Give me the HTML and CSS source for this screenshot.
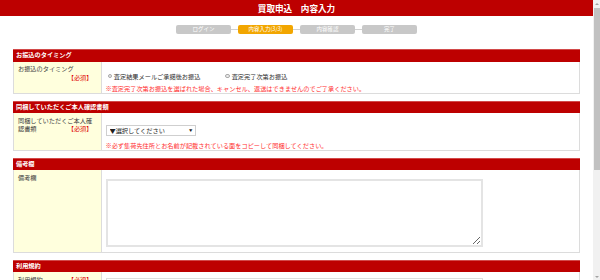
FILE: index.html
```html
<!DOCTYPE html>
<html lang="ja">
<head>
<meta charset="utf-8">
<title>買取申込 内容入力</title>
<link rel="stylesheet" href="styles.css">
</head>
<body>
<div class="window">
<div class="page">
<header class="site-header">
  <h1 class="site-title">買取申込　内容入力</h1>
</header>

<nav class="steps">
  <span class="step">ログイン</span>
  <span class="connector"></span>
  <span class="step current">内容入力(3/3)</span>
  <span class="connector"></span>
  <span class="step">内容確認</span>
  <span class="connector"></span>
  <span class="step">完了</span>
</nav>

<main class="form">
  <section class="section">
    <h2 class="section-head">お振込のタイミング</h2>
    <div class="row">
      <div class="row-label">お振込のタイミング<span class="req">【必須】</span></div>
      <div class="row-field field-timing">
        <div class="radios">
          <label class="radio"><input type="radio" name="timing" class="radio-input">査定結果メールご承諾後お振込</label>
          <label class="radio radio-second"><input type="radio" name="timing" class="radio-input">査定完了次第お振込</label>
        </div>
        <p class="note note-timing">※査定完了次第お振込を選ばれた場合、キャンセル、返送はできませんのでご了承ください。</p>
      </div>
    </div>
  </section>

  <section class="section">
    <h2 class="section-head">同梱していただくご本人確認書類</h2>
    <div class="row">
      <div class="row-label">同梱していただくご本人確認書類<span class="req">【必須】</span></div>
      <div class="row-field field-doc">
        <div class="select-wrap">
          <select class="select">
            <option>▼選択してください</option>
            <option>運転免許証</option>
            <option>健康保険証</option>
            <option>パスポート</option>
          </select>
        </div>
        <p class="note note-doc">※必ず集荷先住所とお名前が記載されている面をコピーして同梱してください。</p>
      </div>
    </div>
  </section>

  <section class="section">
    <h2 class="section-head">備考欄</h2>
    <div class="row">
      <div class="row-label">備考欄</div>
      <div class="row-field field-memo">
        <textarea class="memo"></textarea>
      </div>
    </div>
  </section>

  <section class="section">
    <h2 class="section-head">利用規約</h2>
    <div class="row">
      <div class="row-label">利用規約<span class="req">【必須】</span></div>
      <div class="row-field field-terms">
        <div class="terms-box">
          <p>第1条（目的）本規約は、当社が提供する買取サービスの利用条件を定めるものです。</p>
          <p>第2条（申込）お客様は、本規約に同意のうえ買取をお申込みいただくものとします。</p>
        </div>
      </div>
    </div>
  </section>
</main>
</div>
<div class="scrollbar" aria-hidden="true">
  <span class="sb-arrow sb-up"></span>
  <span class="sb-track"><span class="sb-thumb"></span></span>
  <span class="sb-arrow sb-down"></span>
</div>
</div>
</body>
</html>
```

FILE: styles.css
```css
body {
  margin: 0;
  background: #fff;
  color: #444;
  font-family: "Noto Sans CJK JP", "Noto Sans", sans-serif;
  font-size: 6.2px;
  line-height: 9px;
}

p, h1, h2 {
  margin: 0;
}

.window {
  display: flex;
  height: 100vh;
  overflow: hidden;
}

.page {
  flex: 1;
  min-width: 0;
  overflow: hidden;
}

/* scrollbar drawn as a column on the right */
.scrollbar {
  width: 7px;
  flex: none;
  display: flex;
  flex-direction: column;
  background: #f1f1f1;
}

.sb-arrow {
  height: 7px;
  flex: none;
  display: flex;
  align-items: center;
  justify-content: center;
}

.sb-arrow::before {
  content: "";
  width: 0;
  height: 0;
  border-left: 2px solid transparent;
  border-right: 2px solid transparent;
}

.sb-up::before {
  border-bottom: 2.5px solid #a3a3a3;
}

.sb-down::before {
  border-top: 2.5px solid #a3a3a3;
}

.sb-track {
  flex: 1;
  display: flex;
  flex-direction: column;
  padding: 1px 0 0 1px;
}

.sb-thumb {
  height: 162px;
  background: #c1c1c1;
}

.site-header {
  background: #bd0000;
  height: 16px;
  display: flex;
  align-items: center;
  justify-content: center;
}

.site-title {
  color: #fff;
  font-size: 8.6px;
  font-weight: bold;
  line-height: 16px;
}

.steps {
  display: flex;
  justify-content: center;
  align-items: center;
  margin-top: 9px;
  height: 9px;
}

.step {
  width: 55.5px;
  height: 9px;
  border-radius: 2px;
  background: #c8c8c8;
  color: #fff;
  font-size: 5.5px;
  line-height: 9px;
  text-align: center;
}

.step.current {
  background: #f2a600;
}

.connector {
  width: 6.5px;
  height: 1px;
  background: #d0d0d0;
}

.form {
  width: 567px;
  margin: 15px auto 0;
}

.section {
  margin-bottom: 6.5px;
}

.section-head {
  background: #bd0000;
  color: #fff;
  font-size: 6.2px;
  font-weight: bold;
  height: 12.5px;
  line-height: 12.5px;
  padding-left: 3px;
  box-shadow: inset 0 1px 0 #d24a4a;
}

.row {
  display: grid;
  grid-template-columns: 87.5px 1fr;
  border: 1px solid #dcdcdc;
  border-top: none;
}

.row-label {
  background: #ffffdd;
  border-right: 1px solid #dcdcdc;
  padding: 3.5px 8px 0 4px;
  line-height: 8.7px;
  color: #3d3d3d;
}

.req {
  float: right;
  color: #e00000;
}

.row-field {
  padding: 0 4px;
}

.field-timing {
  padding-top: 10px;
  padding-bottom: 0.5px;
}

.radios {
  display: flex;
  align-items: center;
  height: 9px;
}

.radio {
  display: inline-flex;
  align-items: center;
  color: #2e2e2e;
}

.radio-second {
  margin-left: 23px;
}

.radio-input {
  appearance: none;
  width: 4.7px;
  height: 4.7px;
  margin: 0 1.6px 0 2px;
  border: 0.8px solid #a8a8a8;
  border-radius: 50%;
  background: #ececec;
  box-sizing: border-box;
}

.note {
  color: #ff2e2e;
  line-height: 9px;
}

.note-timing {
  margin-top: 3px;
}

.field-doc {
  padding-top: 11.5px;
  padding-bottom: 0.5px;
}

.select-wrap {
  position: relative;
  width: 90px;
  height: 11px;
}

.select {
  appearance: none;
  display: block;
  width: 90px;
  height: 11px;
  margin: 0;
  padding: 0 0 0 3px;
  border: 1px solid #cfcfcf;
  border-radius: 0;
  background: #fff;
  color: #1e1e1e;
  font-family: inherit;
  font-size: 6.2px;
  line-height: 9px;
  box-sizing: border-box;
}

.select-wrap::after {
  content: "▼";
  position: absolute;
  right: 3px;
  top: 0;
  font-size: 3.4px;
  line-height: 11px;
  color: #222;
  pointer-events: none;
}

.note-doc {
  margin-top: 5px;
}

.field-memo {
  padding-top: 9px;
  padding-bottom: 5px;
}

.memo {
  display: block;
  width: 377px;
  height: 68px;
  margin: 0;
  padding: 2px;
  border: 2px solid #e4e4e4;
  border-radius: 0;
  box-sizing: border-box;
  font-family: inherit;
  font-size: 6.2px;
  resize: both;
}

.field-terms {
  padding-top: 6px;
  padding-bottom: 6px;
}

.terms-box {
  width: 377px;
  height: 40px;
  border: 1px solid #ddd;
  padding: 3px;
  box-sizing: border-box;
  overflow: hidden;
  color: #555;
}
```
